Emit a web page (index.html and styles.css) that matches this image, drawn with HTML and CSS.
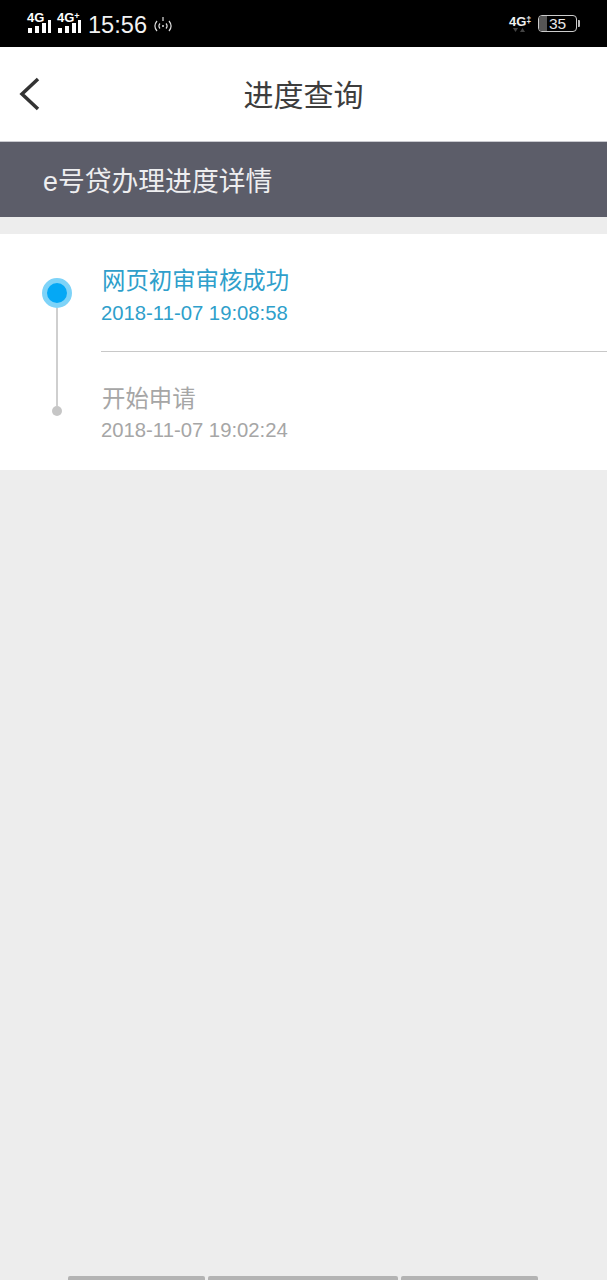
FILE: index.html
```html
<!DOCTYPE html>
<html lang="zh">
<head>
<meta charset="utf-8">
<title>进度查询</title>
<link rel="stylesheet" href="styles.css">
</head>
<body>
<div class="page">
  <div class="status">
    <div class="status-left">
      <div class="signal">
        <span class="net">4G</span>
        <svg class="bars" width="26" height="14" viewBox="0 0 26 14"><path d="M1 9h4v5H1zM8 7h4v7H8zM15 4h4v10h-4z" fill="#fff"/><path d="M21 1h3v13h-3z" fill="#fff"/></svg>
      </div>
      <div class="signal">
        <span class="net">4G<sup class="plus">+</sup></span>
        <svg class="bars" width="26" height="14" viewBox="0 0 26 14"><path d="M1 9h4v5H1zM8 7h4v7H8zM15 4h4v10h-4z" fill="#fff"/><path d="M21 1h3v13h-3z" fill="#fff"/></svg>
      </div>
      <span class="clock">15:56</span>
      <svg class="hotspot" width="20" height="18" viewBox="0 0 20 18" fill="none" stroke="#ddd" stroke-width="1.2"><path d="M4 5C1.500 8 1.500 12 4 15M16 5c2.500 3 2.500 7 0 10M7 7.500c-1.300 1.500-1.300 3.500 0 5M13 7.500c1.300 1.500 1.300 3.500 0 5M10 1v4"/><circle cx="10" cy="10" r="1" fill="#ddd" stroke="none"/></svg>
    </div>
    <div class="status-right">
      <div class="net-right">
        <span class="net net-small">4G<sup class="plus">‡</sup></span>
        <svg class="arrows" width="14" height="5" viewBox="0 0 14 5"><path d="M1 0h5L3.500 4zM8 4h5l-2.500-4z" fill="#444"/></svg>
      </div>
      <div class="battery"><span class="battery-fill"></span><span class="battery-num">35</span></div>
      <span class="battery-tip"></span>
    </div>
  </div>

  <header class="nav">
    <svg class="back" width="22" height="34" viewBox="0 0 22 34" fill="none" stroke="#333" stroke-width="3.500"><path d="M19 2 3 17l16 15"/></svg>
    <h1 class="nav-title">进度查询</h1>
  </header>

  <div class="banner">e号贷办理进度详情</div>

  <section class="card">
    <div class="rail">
      <span class="dot-active"></span>
      <span class="rail-line"></span>
      <span class="dot-idle"></span>
    </div>
    <div class="steps">
      <div class="step step-active">
        <div class="step-title">网页初审审核成功</div>
        <div class="step-time">2018-11-07 19:08:58</div>
      </div>
      <div class="step step-idle">
        <div class="step-title">开始申请</div>
        <div class="step-time">2018-11-07 19:02:24</div>
      </div>
    </div>
  </section>

  <div class="filler"></div>

  <div class="bottom-bars">
    <span class="seg seg-a"></span>
    <span class="seg seg-b"></span>
    <span class="seg seg-c"></span>
  </div>
</div>
</body>
</html>
```

FILE: styles.css
```css
* { box-sizing: border-box; }
html, body { margin: 0; padding: 0; }
body {
  font-family: "Liberation Sans", "Noto Sans CJK SC", sans-serif;
  background: #ededed;
}
.page {
  width: 607px;
  height: 1280px;
  display: flex;
  flex-direction: column;
  overflow: hidden;
}
.status {
  height: 47px;
  flex: none;
  background: #000;
  color: #fff;
  display: flex;
  justify-content: space-between;
  align-items: center;
  padding: 0 29px 0 27px;
}
.status-left { display: flex; align-items: center; }
.signal { position: relative; width: 26px; height: 22px; margin: -4px 4px 0 0; }
.signal .bars { position: absolute; left: 0; bottom: 0; }
.net {
  position: absolute;
  left: 0;
  top: 0;
  font-size: 13px;
  font-weight: 700;
  line-height: 14px;
  z-index: 1;
  text-shadow: 0 0 1px #000;
}
.plus { font-size: 9px; line-height: 0; vertical-align: 3px; }
.clock { font-size: 23.600px; margin: 2px 0 0 1px; color: #f2f2f2; line-height: 28px; }
.hotspot { margin: 2px 0 0 6px; }
.status-right { display: flex; align-items: center; }
.net-right { position: relative; width: 29px; height: 18px; margin-top: 1px; }
.net-small { top: 0; color: #f0f0f0; }
.arrows { position: absolute; left: 3px; top: 13px; }
.battery {
  position: relative;
  width: 39px;
  height: 17px;
  border: 1.500px solid #ccc;
  border-radius: 4px;
  overflow: hidden;
  display: flex;
  align-items: center;
  justify-content: center;
}
.battery-fill { position: absolute; left: 0; top: 0; bottom: 0; width: 22%; background: #555; }
.battery-num { position: relative; font-size: 15.500px; line-height: 14px; color: #e8e8e8; }
.battery-tip { width: 2px; height: 7px; background: #bbb; margin-left: 1px; border-radius: 0 1px 1px 0; margin-right: -2px; }

.nav {
  height: 94px;
  flex: none;
  background: #fff;
  position: relative;
  display: flex;
  align-items: center;
  justify-content: center;
  padding-top: 4px;
}
.back { position: absolute; left: 19px; top: 30px; }
.nav-title {
  margin: 0;
  font-size: 30px;
  font-weight: 400;
  color: #3d3d3d;
  line-height: 36px;
}
.banner {
  height: 76px;
  flex: none;
  background: #5c5d69;
  border-top: 1px solid #c9c9cf;
  color: #eeeef0;
  font-size: 26.800px;
  line-height: 80px;
  padding-left: 43px;
}
.card {
  margin-top: 17px;
  height: 236px;
  flex: none;
  background: #fff;
  display: flex;
}
.rail {
  width: 30px;
  margin-left: 42px;
  padding-top: 44px;
  display: flex;
  flex-direction: column;
  align-items: center;
}
.dot-active {
  width: 30px;
  height: 30px;
  flex: none;
  border-radius: 50%;
  background: #05a8f5;
  border: 5px solid #7ed3f8;
}
.rail-line { width: 2px; height: 98px; flex: none; background: #cfcfcf; }
.dot-idle { width: 10px; height: 10px; flex: none; border-radius: 50%; background: #c6c6c6; }
.steps { flex: 1; margin-left: 29px; }
.step-active { height: 118px; padding-top: 31px; border-bottom: 1px solid #c8c8c8; color: #2f9fcb; }
.step-active .step-time { padding-top: 1px; }
.step-idle { padding-top: 31px; color: #a6a6a6; }
.step-title { font-size: 23.400px; line-height: 32px; padding-left: 1px; }
.step-time { font-size: 20.300px; line-height: 30px; }
.filler { flex: 1; }
.bottom-bars { height: 4px; flex: none; display: flex; gap: 3px; padding-left: 68px; }
.seg { height: 4px; background: #b3b3b3; border-radius: 2px 2px 0 0; }
.seg-a { width: 137px; }
.seg-b { width: 190px; }
.seg-c { width: 137px; }
```
